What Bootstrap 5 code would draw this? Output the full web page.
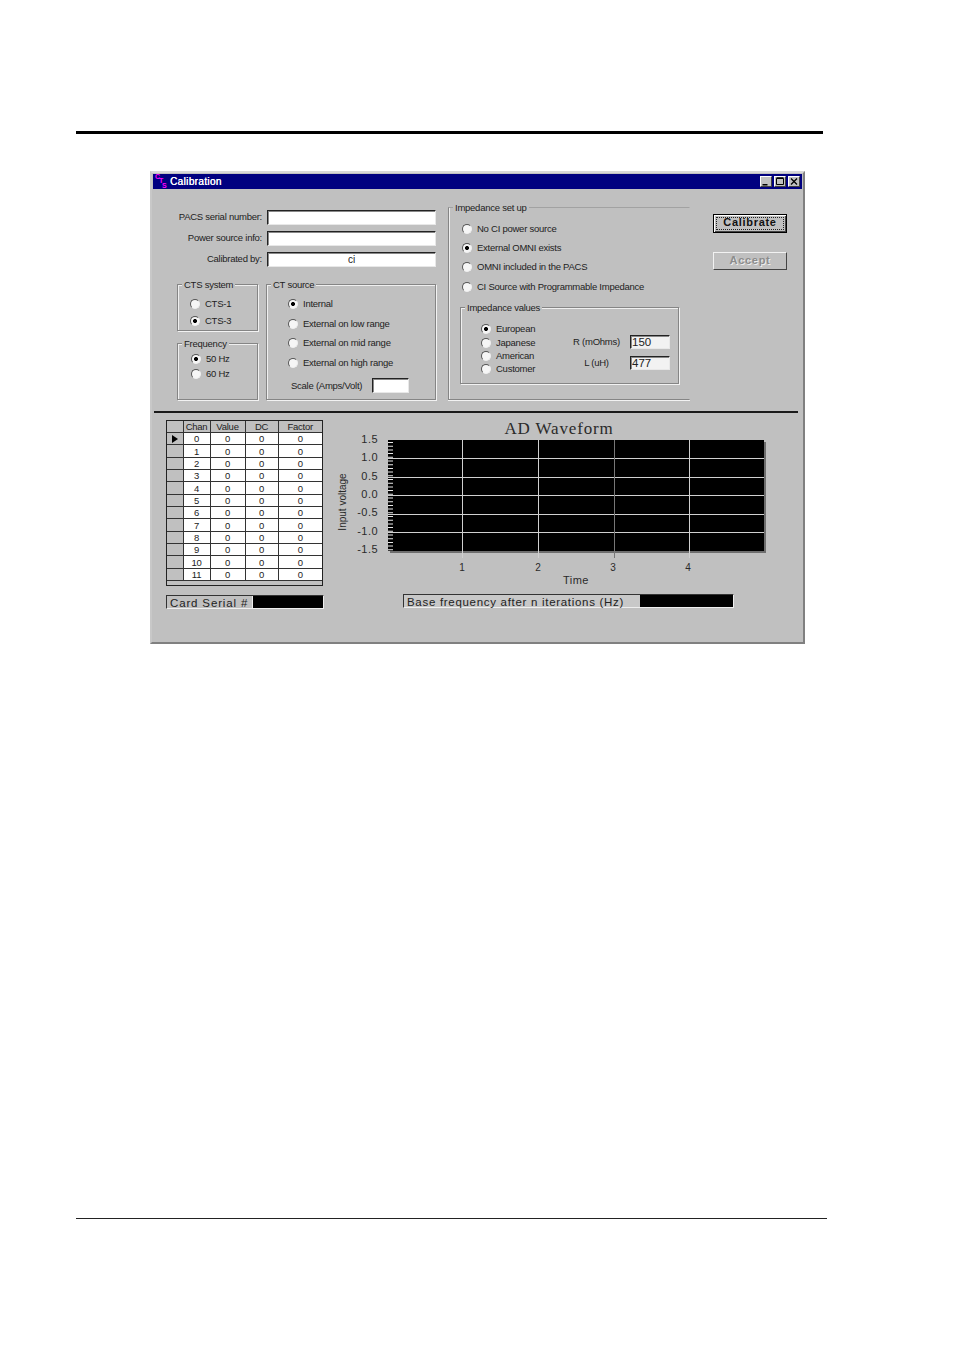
<!DOCTYPE html>
<html lang="en">
<head>
<meta charset="utf-8">
<title>Calibration</title>
<link href="https://cdn.jsdelivr.net/npm/bootstrap@5.3.0/dist/css/bootstrap.min.css" rel="stylesheet">
<style>
body{background:#fff;margin:0;font-family:"Liberation Sans",Arial,sans-serif;font-size:9.5px;letter-spacing:-.25px;color:#222;line-height:12px}
.page-sheet{padding-top:131px;height:1351px;overflow:hidden}
.rule-top{height:3px;width:747px;margin-left:76px;background:#000}
.rule-bottom{height:1px;width:751px;margin-left:76px;margin-top:574px;background:#222}
.dlg{width:655px;height:473px;margin:37px 0 0 150px;background:#c0c0c0;padding:1px;border:2px solid;border-color:#d8d8d8 #808080 #808080 #c8c8c8}
.dlg-title{height:15px;background:#000080;color:#fff;font-size:10px;padding-right:2px}
.dlg-logo{width:17px;height:15px;position:relative;flex:none;color:#f0f;font-size:7px;font-weight:700;letter-spacing:0}
.dlg-logo span{position:absolute;line-height:6px}
.dlg-logo .l1{left:2px;top:0}.dlg-logo .l2{left:6px;top:4px}.dlg-logo .l3{left:9px;top:9px}
.dlg-name{letter-spacing:.35px;text-shadow:.3px 0 0 #fff}
.cap-set{gap:2px}
.capbtn{width:12px;height:11px;background:#c0c0c0;border:1px solid;border-color:#fff #404040 #404040 #fff;flex:none;display:block}
.top-pane{height:222px;padding:18px 0 0 24px}
.left-col{width:259px;padding-top:3px;flex:none}
.fld-row{height:15px;margin-bottom:6px}
.fld-lab{width:85px;text-align:right;margin-right:5px;white-space:nowrap;padding-bottom:1px}
.sunk{background:#fff;border:1px solid;border-color:#222 #e8e8e8 #e8e8e8 #222;box-shadow:inset 1px 1px 0 #888;border-radius:0;padding:0 1px;font:10px/12px "Liberation Sans",sans-serif;color:#222;outline:0;display:block}
.sunk-wide{width:169px;height:15px}
.sunk-ctr{text-align:center}
.groups{margin-top:17px}
.grp{position:relative;border:1px solid #858585;box-shadow:1px 1px 0 #f2f2f2,inset 1px 1px 0 #efefef}
.grp-title{position:absolute;top:-6px;left:4px;background:#c0c0c0;padding:0 2px;white-space:nowrap;line-height:12px}
.grp-small{width:81px}
.grp-cts{height:47px;padding:13px 0 0 12px}
.grp-frq{height:57px;margin-top:12px;padding:9px 0 0 13px}
.grp-ct{width:170px;height:116px;margin-left:8px;padding:13px 0 0 21px}
.grp-imp{width:242px;height:193px;margin-left:12px;flex:none;padding:15px 0 0 13px;border-color:#a2a2a2 transparent #858585 #858585;box-shadow:0 1px 0 #f2f2f2,inset 1px 0 0 #efefef}
.grp-val{width:219px;height:77px;margin:14px 0 0 -2px;padding:15px 0 0 20px;position:relative}
.opt{display:flex;align-items:center;height:12px;white-space:nowrap}
.opt .form-check-input{width:10px;height:10px;margin:0 5px 0 0;flex:none;float:none;background-color:#f6f6f6;border:1px solid;border-color:#555 #eee #eee #555;border-radius:50%;box-shadow:none}
.opt .form-check-input:checked{background-color:#f6f6f6;background-image:radial-gradient(circle,#000 0 1.7px,transparent 2.3px);background-size:auto;border-color:#555 #eee #eee #555}
.gap-5p{margin-top:5px}.gap-3p{margin-top:3px}.gap-8p{margin-top:7.7px}.gap-imp{margin-top:6.8px}.gap-val{margin-top:1.4px}
.scale-row{margin:9px 0 0 3px;height:15px}
.sunk-scale{width:37px;height:15px;margin-left:10px}
.imp-fields{position:absolute;left:110px;top:27px;width:100px}
.imp-line{height:14px;margin-bottom:7px}
.imp-lab{width:59px;text-align:center;white-space:nowrap;padding-right:8px}
.sunk-val{width:40px;height:14px;background:#f2f2f2;font-size:11.5px;line-height:12px;text-align:left;padding:0 1px}
.btn-col{width:74px;margin-left:23px;padding-top:7px;flex:none}
.win-btn{display:block;width:74px;height:19px;padding:0 0 2px;border-radius:0;background:#c0c0c0;font:700 11px/13px "Liberation Sans",sans-serif;letter-spacing:.7px;color:#111;border:1px solid #000;box-shadow:inset 1px 1px 0 #fff,inset -1px -1px 0 #444;outline:1px dotted #222;outline-offset:-4px}
.win-btn.win-btn-off{height:18px;margin-top:19px;color:#8c8c8c;text-shadow:1px 1px 0 #eee;border-color:#f2f2f2 #444 #444 #f2f2f2;box-shadow:none;opacity:1;background:#c0c0c0;outline:0}
.divider{height:2px;background:#1a1a1a;margin:0 4px 0 1px}
.low-pane{padding:7px 0 0 13px}
.left-low{width:158px;flex:none}
.grid-wrap{height:166px;background:#c0c0c0;border:1px solid #222;width:157px;overflow:hidden}
.grid-t{width:100%;margin:0;border-collapse:collapse;table-layout:fixed;font-size:9.5px;letter-spacing:-.25px;line-height:11px;color:#222;--bs-table-bg:transparent}
.grid-wrap .grid-t>*>*>*{padding:0;border:1px solid #333;text-align:center;height:12.35px;background:#fff;box-shadow:none;color:#222;vertical-align:middle}
.grid-wrap .grid-t>thead>tr>th{background:#c0c0c0;font-weight:400;height:11px;border-top:0}
.grid-wrap .grid-t>tbody>tr>th{background:#c0c0c0;font-weight:400}
.grid-wrap .grid-t>*>*>*:first-child{border-left:0}
.grid-wrap .grid-t>*>*>*:last-child{border-right:0}
.arrow{display:block;width:0;height:0;margin:0 auto;border:solid transparent;border-width:4px 0 4px 6px;border-left-color:#000}
.read-box{height:14px;border:1px solid;border-color:#333 #eee #eee #333;font-size:11.5px;line-height:14px;letter-spacing:.7px;color:#222;white-space:nowrap}
.read-lab{padding-left:3px}
.read-val{background:#000;align-self:stretch}
.serial{margin-top:9px;width:158px}
.serial .read-lab{width:86px;border-right:1px solid #eee;letter-spacing:.85px}
.serial .read-val{width:70px}
.chart-side{margin-left:6px;flex:none}
.chart-svg{display:block;width:470px;height:170px}
.chart-svg text{font-family:"Liberation Sans",sans-serif;font-size:11px;fill:#2a2a2a;letter-spacing:.45px}
.chart-svg .ttl{font-family:"Liberation Serif",serif;font-size:17px;letter-spacing:.85px}
.chart-svg .sm{font-size:10px;letter-spacing:0}
.base{margin:4px 0 0 73px;width:331px}
.base .read-lab{width:236px;background:#c8c8c8}
.base .read-val{width:93px}
</style>
</head>
<body>
<div class="page-sheet">
  <div class="rule-top"></div>
  <div class="dlg">
    <div class="dlg-title d-flex align-items-center">
      <div class="dlg-logo"><span class="l1">C</span><span class="l2">T</span><span class="l3">S</span></div>
      <span class="dlg-name flex-grow-1">Calibration</span>
      <span class="d-flex cap-set">
        <svg class="capbtn" viewBox="0 0 10 9"><rect x="1.5" y="7" width="5" height="1.5" fill="#000"/></svg>
        <svg class="capbtn" viewBox="0 0 10 9"><path d="M1.5 1.5h7v6h-7z" fill="none" stroke="#000"/><path d="M1.5 1h7" stroke="#000" stroke-width="1.5"/></svg>
        <svg class="capbtn" viewBox="0 0 10 9"><path d="M2 1.5l6 6M8 1.5l-6 6" stroke="#000" stroke-width="1.3"/></svg>
      </span>
    </div>

    <div class="top-pane d-flex">
      <div class="left-col">
        <div class="fld-row d-flex align-items-center"><label class="fld-lab">PACS serial number:</label><input class="sunk sunk-wide" type="text"></div>
        <div class="fld-row d-flex align-items-center"><label class="fld-lab">Power source info:</label><input class="sunk sunk-wide" type="text"></div>
        <div class="fld-row d-flex align-items-center"><label class="fld-lab">Calibrated by:</label><input class="sunk sunk-wide sunk-ctr" type="text" value="ci"></div>
        <div class="groups d-flex">
          <div class="grp-small">
            <div class="grp grp-cts">
              <span class="grp-title">CTS system</span>
              <label class="opt"><input class="form-check-input" type="radio" name="cts">CTS-1</label>
              <label class="opt gap-5p"><input class="form-check-input" type="radio" name="cts" checked>CTS-3</label>
            </div>
            <div class="grp grp-frq">
              <span class="grp-title">Frequency</span>
              <label class="opt"><input class="form-check-input" type="radio" name="frq" checked>50 Hz</label>
              <label class="opt gap-3p"><input class="form-check-input" type="radio" name="frq">60 Hz</label>
            </div>
          </div>
          <div class="grp grp-ct">
            <span class="grp-title">CT source</span>
            <label class="opt"><input class="form-check-input" type="radio" name="ct" checked>Internal</label>
            <label class="opt gap-8p"><input class="form-check-input" type="radio" name="ct">External on low range</label>
            <label class="opt gap-8p"><input class="form-check-input" type="radio" name="ct">External on mid range</label>
            <label class="opt gap-8p"><input class="form-check-input" type="radio" name="ct">External on high range</label>
            <div class="scale-row d-flex align-items-center"><span>Scale (Amps/Volt)</span><input class="sunk sunk-scale" type="text"></div>
          </div>
        </div>
      </div>

      <div class="grp grp-imp">
        <span class="grp-title">Impedance set up</span>
        <label class="opt"><input class="form-check-input" type="radio" name="imp">No CI power source</label>
        <label class="opt gap-imp"><input class="form-check-input" type="radio" name="imp" checked>External OMNI exists</label>
        <label class="opt gap-8p"><input class="form-check-input" type="radio" name="imp">OMNI included in the PACS</label>
        <label class="opt gap-8p"><input class="form-check-input" type="radio" name="imp">CI Source with Programmable Impedance</label>
        <div class="grp grp-val">
          <span class="grp-title">Impedance values</span>
          <label class="opt"><input class="form-check-input" type="radio" name="val" checked>European</label>
          <label class="opt gap-val"><input class="form-check-input" type="radio" name="val">Japanese</label>
          <label class="opt gap-val"><input class="form-check-input" type="radio" name="val">American</label>
          <label class="opt gap-val"><input class="form-check-input" type="radio" name="val">Customer</label>
          <div class="imp-fields">
            <div class="imp-line d-flex align-items-center"><span class="imp-lab">R (mOhms)</span><input class="sunk sunk-val" type="text" value="150"></div>
            <div class="imp-line d-flex align-items-center"><span class="imp-lab">L (uH)</span><input class="sunk sunk-val" type="text" value="477"></div>
          </div>
        </div>
      </div>

      <div class="btn-col">
        <button type="button" class="btn win-btn">Calibrate</button>
        <button type="button" class="btn win-btn win-btn-off" disabled>Accept</button>
      </div>
    </div>

    <div class="divider"></div>

    <div class="low-pane d-flex">
      <div class="left-low">
        <div class="grid-wrap">
          <table class="table grid-t">
            <colgroup><col style="width:16px"><col style="width:27px"><col style="width:35px"><col style="width:33px"><col></colgroup>
            <thead><tr><th></th><th>Chan</th><th>Value</th><th>DC</th><th>Factor</th></tr></thead>
            <tbody>
              <tr><th><span class="arrow"></span></th><td>0</td><td>0</td><td>0</td><td>0</td></tr>
              <tr><th></th><td>1</td><td>0</td><td>0</td><td>0</td></tr>
              <tr><th></th><td>2</td><td>0</td><td>0</td><td>0</td></tr>
              <tr><th></th><td>3</td><td>0</td><td>0</td><td>0</td></tr>
              <tr><th></th><td>4</td><td>0</td><td>0</td><td>0</td></tr>
              <tr><th></th><td>5</td><td>0</td><td>0</td><td>0</td></tr>
              <tr><th></th><td>6</td><td>0</td><td>0</td><td>0</td></tr>
              <tr><th></th><td>7</td><td>0</td><td>0</td><td>0</td></tr>
              <tr><th></th><td>8</td><td>0</td><td>0</td><td>0</td></tr>
              <tr><th></th><td>9</td><td>0</td><td>0</td><td>0</td></tr>
              <tr><th></th><td>10</td><td>0</td><td>0</td><td>0</td></tr>
              <tr><th></th><td>11</td><td>0</td><td>0</td><td>0</td></tr>
            </tbody>
          </table>
        </div>
        <div class="read-box serial d-flex"><span class="read-lab">Card Serial #</span><span class="read-val"></span></div>
      </div>

      <div class="chart-side">
        <svg class="chart-svg" viewBox="0 0 470 170">
          <text class="ttl" x="229" y="14" text-anchor="middle">AD Waveform</text>
          <rect x="60" y="22" width="376" height="111" fill="#6e6e6e"/>
          <rect x="58" y="20" width="376" height="111" fill="#000"/>
          <path d="M132.5 20V138M208.5 20V138M359.5 20V138M58 38.5H434M58 57.5H434M58 75.5H434M58 94.5H434M58 112.5H434" stroke="#d0d0d0" stroke-width="1" fill="none"/>
          <path d="M284.5 20V138" stroke="#777" stroke-width="1" fill="none"/>
          <path d="M60.5 22V131" stroke="#e8e8e8" stroke-width="5" stroke-dasharray="1 2.7" fill="none"/>
          <g text-anchor="end">
            <text x="48" y="23">1.5</text><text x="48" y="41">1.0</text><text x="48" y="60">0.5</text><text x="48" y="78">0.0</text><text x="48" y="96">-0.5</text><text x="48" y="115">-1.0</text><text x="48" y="133">-1.5</text>
          </g>
          <g text-anchor="middle">
            <text class="sm" x="132" y="151">1</text><text class="sm" x="208" y="151">2</text><text class="sm" x="283" y="151">3</text><text class="sm" x="358" y="151">4</text>
            <text x="246" y="164">Time</text>
            <text class="sm" transform="translate(16 82) rotate(-90)">Input voltage</text>
          </g>
        </svg>
        <div class="read-box base d-flex"><span class="read-lab">Base frequency after n iterations (Hz)</span><span class="read-val"></span></div>
      </div>
    </div>
  </div>
  <div class="rule-bottom"></div>
</div>
<script src="https://cdn.jsdelivr.net/npm/bootstrap@5.3.0/dist/js/bootstrap.bundle.min.js"></script>
</body>
</html>
